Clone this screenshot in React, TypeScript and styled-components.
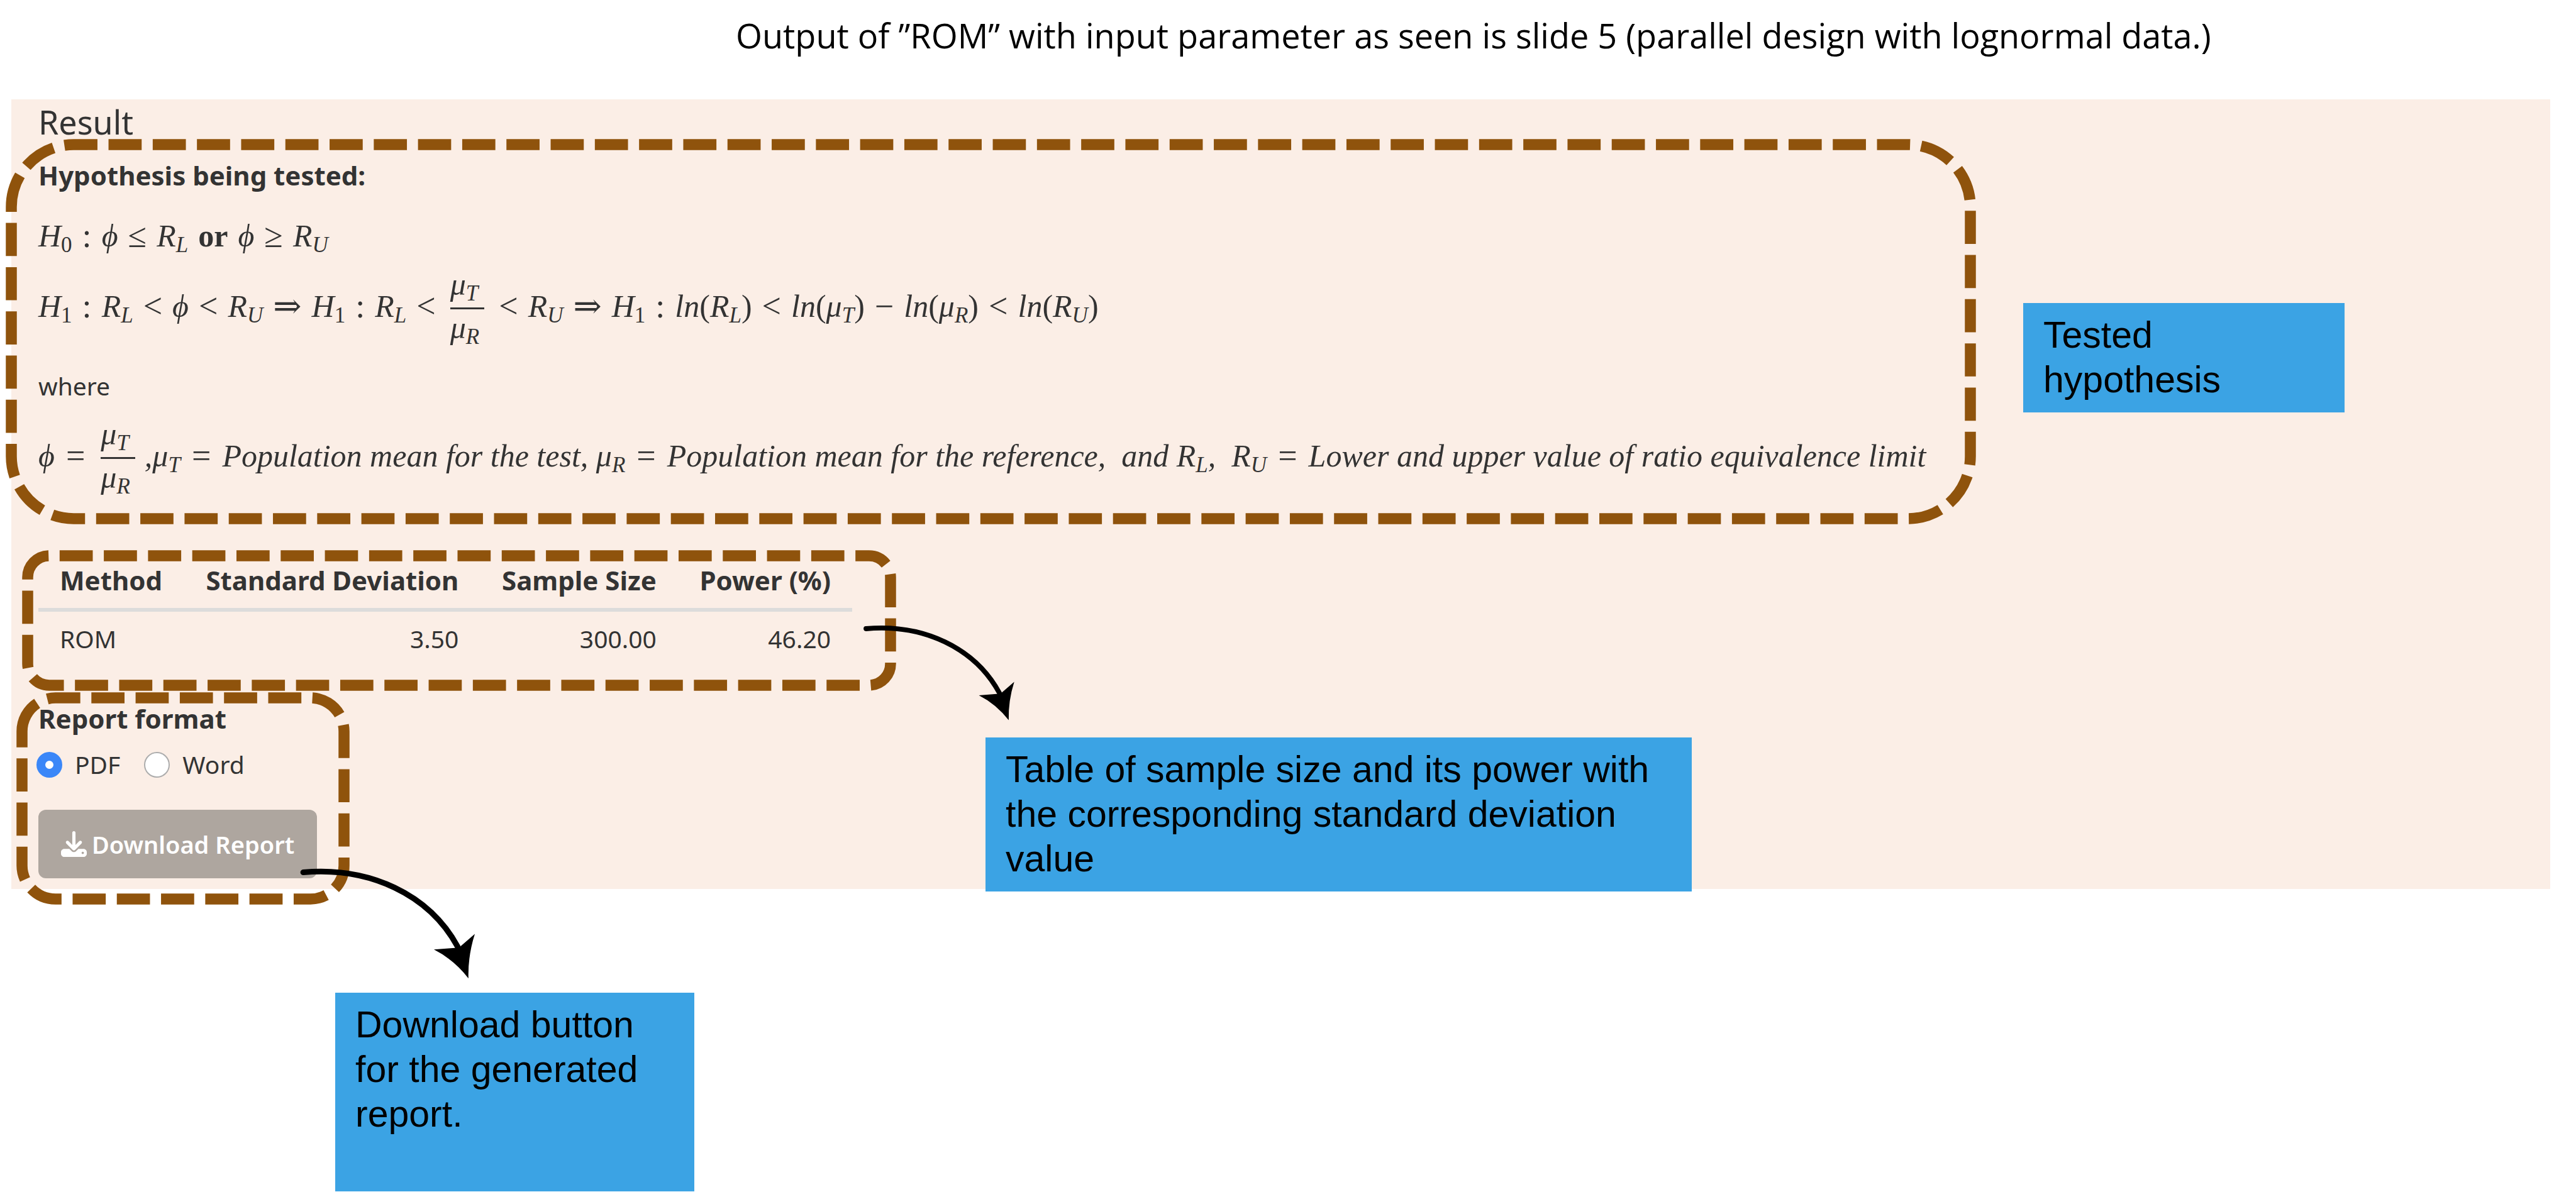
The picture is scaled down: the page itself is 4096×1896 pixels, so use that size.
import React, { useState } from "react";
import styled, { createGlobalStyle } from "styled-components";
import { FaDownload } from "react-icons/fa6";

const brown = "#8f530c";
const ui = `"Noto Sans", "Open Sans", sans-serif`;

const GlobalStyle = createGlobalStyle`
  * { box-sizing: border-box; }
  body { margin: 0; background: #fff; }
`;

const Slide = styled.main`
  position: relative;
  min-height: 100vh;
  overflow: hidden;
  display: flex;
  flex-direction: column;
  background: #fff;
`;

const SlideHeader = styled.header`
  height: 158px;
  padding: 19px 0 0 1170px;
`;

const SlideTitle = styled.h1`
  margin: 0;
  font: 500 54px/74px "Open Sans", "Noto Sans", sans-serif;
  color: #000;
  white-space: nowrap;
`;

const Panel = styled.section`
  margin: 0 41px 0 18px;
  padding: 0 43px 17px;
  background: #fbeee6;
  color: #333;
  font: 400 39px/56px ${ui};
`;

const PanelTitle = styled.h2`
  margin: 0;
  font: 400 52px/72px ${ui};
`;

const Outlined = styled.div`
  position: relative;
`;

const Hypothesis = styled(Outlined)`
  padding: 19px 0 42px;
`;

const BoldLabel = styled.h3`
  margin: 0;
  font: 700 42px/60px ${ui};
`;

const Formula = styled.div<{ $before: number }>`
  display: flex;
  align-items: center;
  margin-top: ${(p) => p.$before}px;
  font: italic 400 50px/60px "Liberation Serif", "DejaVu Serif", serif;
  white-space: pre;
`;

const Note = styled.p`
  margin: 40px 0 0;
`;

const Sub = styled.sub<{ $upright?: boolean }>`
  font-size: 35px;
  font-style: ${(p) => (p.$upright ? "normal" : "italic")};
  line-height: 0;
  vertical-align: -9px;
`;

const Relation = styled.span<{ $wide?: boolean }>`
  margin: 0 ${(p) => (p.$wide ? 18 : 16)}px;
  font-size: 54px;
  font-style: normal;
`;

const Or = styled.strong`
  margin: 0 16px;
  font-style: normal;
`;

const Comma = styled.span`
  margin-left: 8px;
`;

const Upright = styled.span`
  font-style: normal;
`;

const FractionBox = styled.span`
  display: inline-flex;
  flex-direction: column;
  padding: 0 7px;
  line-height: 50px;
`;

const Numerator = styled.span`
  padding-bottom: 12px;
  border-bottom: 3px solid #333;
`;

const Denominator = styled.span`
  padding: 4px 8px 0 0;
`;

const TableArea = styled(Outlined)`
  margin-top: 51px;
`;

const Table = styled.table`
  width: 1294px;
  border-collapse: collapse;
`;

const HeadCell = styled.th<{ $start?: boolean }>`
  padding: 16px 34px 14px;
  border-bottom: 6px solid #dcdcdb;
  font: 700 42px/60px ${ui};
  text-align: ${(p) => (p.$start ? "left" : "right")};
  white-space: nowrap;
`;

const Cell = styled.td<{ $start?: boolean }>`
  padding: 15px 34px;
  text-align: ${(p) => (p.$start ? "left" : "right")};
`;

const Report = styled(Outlined)`
  margin-top: 54px;
`;

const RadioRow = styled.div`
  display: flex;
  gap: 38px;
  margin: 15px 0 44px -3px;
`;

const RadioLabel = styled.label`
  display: flex;
  align-items: center;
  gap: 20px;
`;

const Radio = styled.input`
  appearance: none;
  width: 41px;
  height: 41px;
  margin: 0;
  border: 2px solid #adadad;
  border-radius: 50%;
  background: #fff;
  &:checked {
    border: 14px solid #3b87f8;
  }
`;

const DownloadButton = styled.button`
  display: flex;
  align-items: center;
  justify-content: center;
  gap: 8px;
  width: 443px;
  height: 109px;
  padding: 0;
  border: 0;
  border-radius: 12px;
  background: #aea69f;
  color: #fff;
  font: 600 38px/56px ${ui};
  white-space: nowrap;
`;

const Callout = styled.aside<{ $x: number; $y: number; $w: number; $h?: number }>`
  position: absolute;
  left: ${(p) => p.$x}px;
  top: ${(p) => p.$y}px;
  width: ${(p) => p.$w}px;
  min-height: ${(p) => p.$h ?? 0}px;
  padding: 16px 32px;
  background: #3ba3e4;
  color: #000;
  font: 400 59px/71px "Liberation Sans", Arial, sans-serif;
`;

const Overlay = styled.svg<{ $x: number; $y: number }>`
  position: absolute;
  left: ${(p) => p.$x}px;
  top: ${(p) => p.$y}px;
  overflow: visible;
  pointer-events: none;
`;

/* Dashed rounded outline; the corner radius is a sixth of the height. */
function DashedOutline({ x, y, w, h }: { x: number; y: number; w: number; h: number }) {
  const r = h / 6;
  const d = `M0 ${r}A${r} ${r} 0 0 1 ${r} 0H${w - r}A${r} ${r} 0 0 1 ${w} ${r}V${h - r}A${r} ${r} 0 0 1 ${w - r} ${h}H${r}A${r} ${r} 0 0 1 0 ${h - r}Z`;
  return (
    <Overlay $x={x} $y={y} width={w} height={h} aria-hidden="true">
      <path d={d} fill="none" stroke={brown} strokeWidth={17.5} strokeDasharray="52.7 17.6" />
    </Overlay>
  );
}

function CurvedArrow({ x, y, scale }: { x: number; y: number; scale: number }) {
  return (
    <Overlay $x={x} $y={y} width={250 * scale} height={160 * scale} viewBox="0 0 250 160" aria-hidden="true">
      <path d="M7 10C98 2 180 40 219 112" fill="none" stroke="#000" strokeWidth={7.8} strokeLinecap="round" />
      <path d="M186.500 116L221 113.300L242.700 94.500Q233 125 233.900 155.600Q214 130 186.500 116Z" />
    </Overlay>
  );
}

const V = ({ n, s, up }: { n: string; s: string; up?: boolean }) => (
  <span>
    {n}
    <Sub $upright={up}>{s}</Sub>
  </span>
);

const Ln = ({ n, s }: { n: string; s: string }) => (
  <span>
    ln<Upright>(</Upright>
    {n}
    <Sub>{s}</Sub>
    <Upright>)</Upright>
  </span>
);

const Ratio = () => (
  <FractionBox>
    <Numerator><V n="μ" s="T" /></Numerator>
    <Denominator><V n="μ" s="R" /></Denominator>
  </FractionBox>
);

const R = ({ children }: { children: string }) => <Relation>{children}</Relation>;
const Equals = () => <Relation $wide>=</Relation>;

export default function App() {
  const [format, setFormat] = useState("pdf");
  return (
    <>
      <GlobalStyle />
      <Slide>
        <SlideHeader>
          <SlideTitle>
            Output of ”ROM” with input parameter as seen is slide 5 (parallel design with lognormal data.)
          </SlideTitle>
        </SlideHeader>

        <Panel>
          <PanelTitle>Result</PanelTitle>

          <Hypothesis>
            <BoldLabel>Hypothesis being tested:</BoldLabel>
            <Formula $before={36}>
              <V n="H" s="0" up /><R>:</R>ϕ<R>≤</R><V n="R" s="L" /><Or>or</Or>ϕ<R>≥</R><V n="R" s="U" />
            </Formula>
            <Formula $before={22}>
              <V n="H" s="1" up /><R>:</R><V n="R" s="L" /><R>&lt;</R>ϕ<R>&lt;</R><V n="R" s="U" /><R>⇒</R>
              <V n="H" s="1" up /><R>:</R><V n="R" s="L" /><R>&lt;</R><Ratio /><R>&lt;</R><V n="R" s="U" /><R>⇒</R>
              <V n="H" s="1" up /><R>:</R><Ln n="R" s="L" /><R>&lt;</R><Ln n="μ" s="T" /><R>−</R><Ln n="μ" s="R" />
              <R>&lt;</R><Ln n="R" s="U" />
            </Formula>
            <Note>where</Note>
            <Formula $before={23}>
              ϕ<Equals /><Ratio /><Comma>,</Comma><V n="μ" s="T" /><Equals />Population mean for the test, <V n="μ" s="R" />
              <Equals />
              <span>Population mean for the reference,  and </span>
              <V n="R" s="L" /><span>,  </span><V n="R" s="U" /><Equals />
              <span>Lower and upper value of ratio equivalence limit</span>
            </Formula>
            <DashedOutline x={-43} y={0} w={3115} h={595} />
          </Hypothesis>

          <TableArea>
            <Table>
              <thead>
                <tr>
                  <HeadCell $start>Method</HeadCell>
                  <HeadCell>Standard Deviation</HeadCell>
                  <HeadCell>Sample Size</HeadCell>
                  <HeadCell>Power (%)</HeadCell>
                </tr>
              </thead>
              <tbody>
                <tr>
                  <Cell $start>ROM</Cell>
                  <Cell>3.50</Cell>
                  <Cell>300.00</Cell>
                  <Cell>46.20</Cell>
                </tr>
              </tbody>
            </Table>
            <DashedOutline x={-17} y={7} w={1372} h={206} />
          </TableArea>

          <Report>
            <BoldLabel id="format-label">Report format</BoldLabel>
            <RadioRow role="radiogroup" aria-labelledby="format-label">
              <RadioLabel>
                <Radio type="radio" name="format" checked={format === "pdf"} onChange={() => setFormat("pdf")} />
                PDF
              </RadioLabel>
              <RadioLabel>
                <Radio type="radio" name="format" checked={format === "word"} onChange={() => setFormat("word")} />
                Word
              </RadioLabel>
            </RadioRow>
            <DownloadButton type="button">
              <FaDownload size={41} />
              Download Report
            </DownloadButton>
            <DashedOutline x={-26} y={-3} w={512} h={320} />
          </Report>
        </Panel>

        <Callout $x={3217} $y={482} $w={511}>Tested hypothesis</Callout>
        <Callout $x={1567} $y={1173} $w={1123}>
          Table of sample size and its power with the corresponding standard deviation value
        </Callout>
        <Callout $x={533} $y={1579} $w={571} $h={316}>Download button for the generated report.</Callout>
        <CurvedArrow x={1370} y={990} scale={1} />
        <CurvedArrow x={474} y={1376} scale={1.158} />
      </Slide>
    </>
  );
}
